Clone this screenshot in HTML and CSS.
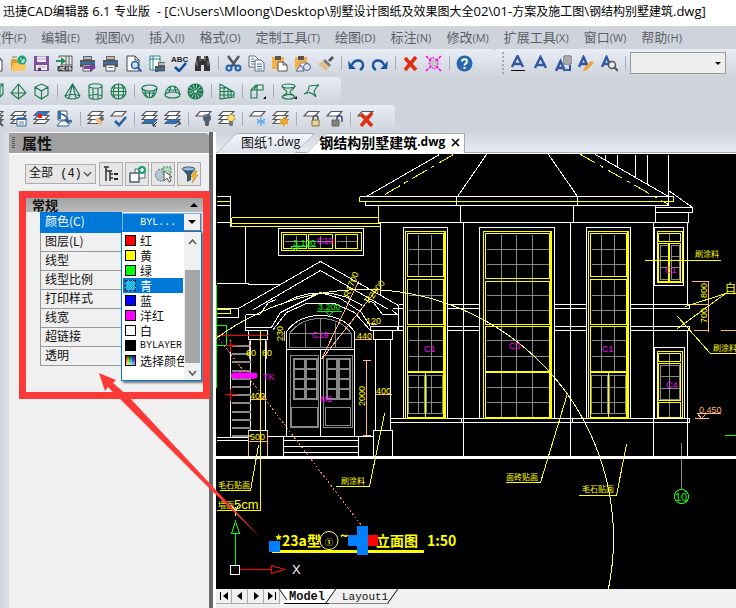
FILE: index.html
```html
<!DOCTYPE html>
<html lang="zh-CN">
<head>
<meta charset="utf-8">
<title>迅捷CAD编辑器 6.1 专业版</title>
<link rel="stylesheet" href="styles.css">
</head>
<body>
<svg class="defs" aria-hidden="true">
  <defs>
    <symbol id="sheets" viewBox="0 0 17 17"><g fill="#fff" stroke="#555" stroke-width="1.2"><path d="M5 9.500h11l-4 4H1z"/><path d="M5 5.500h11l-4 4H1z"/><path d="M5 1.500h11l-4 4H1z"/></g></symbol>
    <symbol id="sheet" viewBox="0 0 17 17"><path d="M5 1.500h11l-4 4.500H1z" fill="#fff" stroke="#555" stroke-width="1.200"/></symbol>
    <symbol id="printer" viewBox="0 0 17 17"><path d="M4 1h9v4H4z" fill="#666"/><path d="M5 2h7v2H5z" fill="#bbb"/><path d="M1 5h15v7H1z" fill="#555"/><path d="M1 7h15v1.500H1z" fill="#3b78c2"/><path d="M4 10h9v6H4z" fill="#fff" stroke="#555"/><path d="M6 12.500h5" stroke="#3b78c2"/></symbol>
    <symbol id="paste" viewBox="0 0 17 17"><path d="M1 2h12v12H1z" fill="#f2b04b"/><path d="M4 1h6v4H4z" fill="#555"/></symbol>
    <g id="casement" stroke="#888"><path d="M418 234V276M431 234V276M408 249H443M408 264H443M418 279V324M431 279V324M408 295H443M408 310H443M418 326V371M431 326V371M408 340H443M408 356H443M408 375H424V413H408ZM426 375H442V413H426ZM418 375V413M431 375V413M408 387H424M426 387H442M408 402H424M426 402H442"/><path stroke="#ff0" d="M405 231H445V418H405ZM407 233H443V276H407ZM407 279H443V324H407ZM407 326H443V371H407ZM407 372H443V417H407ZM425 372V417M444 231V418"/><path stroke="#fff" d="M403 418V227H447V418"/></g>
  </defs>
</svg>

<header class="titlebar"><h1>迅捷<span>CAD</span>编辑器<span> 6.1 </span>专业版<span>&nbsp; - [C:\Users\Mloong\Desktop\</span>别墅设计图纸及效果图大全<span>02\01-</span>方案及施工图<span>\</span>钢结构别墅建筑<span>.dwg]</span></h1></header>

<nav class="menubar" aria-label="菜单">
  <button>文件<span>(F)</span></button><button>编辑<span>(E)</span></button><button>视图<span>(V)</span></button><button>插入<span>(I)</span></button><button>格式<span>(O)</span></button><button>定制工具<span>(T)</span></button><button>绘图<span>(D)</span></button><button>标注<span>(N)</span></button><button>修改<span>(M)</span></button><button>扩展工具<span>(X)</span></button><button>窗口<span>(W)</span></button><button>帮助<span>(H)</span></button>
</nav>

<div class="toolrow">
  <div class="toolbar wide" role="toolbar" aria-label="标准">
    <button aria-label="新建"><svg viewBox="0 0 17 17"><path d="M3 1h8l4 4v11H3z" fill="#fff" stroke="#444"/><path d="M11 1v4h4" fill="none" stroke="#444"/></svg></button>
    <button aria-label="打开"><svg viewBox="0 0 17 17"><path d="M1 4h6l1 2h7v9H1z" fill="#e0982f"/><path d="M3 8h13l-1 8H1z" fill="#ffc55c"/><path d="M2 2h5" stroke="#777"/><circle cx="12" cy="5" r="4.500" fill="#1ea57a"/><path d="M10 3l4 4M14 4v3h-3" stroke="#fff" fill="none"/></svg></button>
    <button aria-label="保存"><svg viewBox="0 0 17 17"><path d="M1 1h15v15H1z" fill="#80509c"/><path d="M4 1.500h9V7H4zM3 10h11v5H3z" fill="#f1edf5"/><path d="M4 4h9M5 12h7" stroke="#aaa"/><path d="M5 13h3v3H5z" fill="#54346c"/></svg></button>
    <button aria-label="ACIS 输入"><svg viewBox="0 0 17 17"><path d="M3 1h13v15H2V11M3 1v2" fill="#eee" stroke="#555"/><path d="M10 1v9M13 1v9M4 10h12" stroke="#555"/><path d="M0 5h5V2l5 4-5 4V7H0z" fill="#218f5a"/><path d="M2 11h14v5H2z" fill="#444"/><path d="M4 15v-2l1-1 1 1v2M9 12H7v3h2M11 12v3M15 12h-2v1.500h2V15h-2" stroke="#fff" fill="none" stroke-width=".8"/></svg></button>
    <button aria-label="输出"><svg viewBox="0 0 17 17"><use href="#printer"/><path d="M5 11h6V8l6 4.500-6 4.500v-3H5z" fill="#7b3fa0"/></svg></button>
    <button aria-label="打印"><svg><use href="#printer"/></svg></button>
    <button aria-label="打印预览"><svg viewBox="0 0 17 17"><path d="M2 1h8l4 4v11H2z" fill="#fff" stroke="#444"/><path d="M10 1v4h4" fill="none" stroke="#444"/><circle cx="10" cy="10" r="3.500" fill="#cde0f5" stroke="#2360ae" stroke-width="1.600"/><path d="M12.500 12.500l4 4" stroke="#2360ae" stroke-width="2"/></svg></button>
    <button aria-label="页面设置"><svg viewBox="0 0 17 17"><path d="M2 1h10v14H2z" fill="#fff" stroke="#2a8291"/><path d="M5 1v14M2 4h10" stroke="#2a8291"/><svg x="6" y="6" width="11" height="11"><use href="#printer"/></svg></svg></button>
    <button aria-label="拼写检查"><svg viewBox="0 0 17 17"><path d="M4 12l4 4 7-8" fill="none" stroke="#0a50a1" stroke-width="2.500"/><text x="0" y="7" class="abc">ABC</text></svg></button>
    <button aria-label="查找"><svg viewBox="0 0 17 17"><path d="M3 1h4v3h3V1h4l2 9v6h-6v-6H7v6H1v-6z" fill="#333"/><path d="M3 6v5M14 6v5M6 1v5M11 1v5" stroke="#999"/></svg></button>
    <hr>
    <button aria-label="剪切"><svg viewBox="0 0 17 17"><path d="M3 1l8 11M14 1L6 12" stroke="#555" stroke-width="2.400"/><circle cx="4" cy="13" r="2.500" fill="none" stroke="#1f62b4" stroke-width="2"/><circle cx="13" cy="13" r="2.500" fill="none" stroke="#1f62b4" stroke-width="2"/></svg></button>
    <button aria-label="复制"><svg viewBox="0 0 17 17"><path d="M1 1h6l3 3v8H1z" fill="#fff" stroke="#667"/><path d="M3 4h3M3 6.500h5M3 9h5" stroke="#2f72be"/><path d="M7 5h6l3 3v8H7z" fill="#fff" stroke="#667"/><path d="M9 9h5M9 11.500h5M9 14h5" stroke="#2f72be"/></svg></button>
    <button aria-label="粘贴"><svg viewBox="0 0 17 17"><use href="#paste"/><path d="M7 7h5l4 3v6H7z" fill="#fff" stroke="#555"/><path d="M12 7v3h4" fill="none" stroke="#555"/></svg></button>
    <button aria-label="粘贴为块"><svg viewBox="0 0 17 17"><use href="#paste"/><path d="M6 8h8v6H6z" fill="#fff" stroke="#888"/><path d="M2 16l5-6 3 6z" fill="#e6ebf5" stroke="#4c628e"/><circle cx="13" cy="12" r="3.500" fill="#d7e0f0" stroke="#4c628e"/></svg></button>
    <button aria-label="特性匹配"><svg viewBox="0 0 17 17"><path d="M11 5l4-4 2 2-4 4z" fill="#555"/><path d="M8 4l6 6-2 2-6-6z" fill="#777"/><path d="M6 6l6 6-3 4-8-7z" fill="#e5bd88"/></svg></button>
    <hr>
    <button aria-label="撤销"><svg viewBox="0 0 17 17"><path d="M4 10c2-6 11-6 11 0 0 2-1 4-3 5" fill="none" stroke="#15559f" stroke-width="2.400"/><path d="M0 6l1 8h7z" fill="#15559f"/></svg></button>
    <button aria-label="重做"><svg viewBox="0 0 17 17"><path d="M13 10C11 4 2 4 2 10c0 2 1 4 3 5" fill="none" stroke="#15559f" stroke-width="2.400"/><path d="M17 6l-1 8H9z" fill="#15559f"/></svg></button>
    <hr>
    <button aria-label="删除"><svg viewBox="0 0 17 17"><path d="M3 3l11 12M14 2L3 15" stroke="#e02d10" stroke-width="3.500"/></svg></button>
    <button aria-label="清理"><svg viewBox="0 0 17 17"><path d="M5 4l3-2 2 2 3 2v5l-3 3-3-1-3-4z" fill="#c3c3c3" stroke="#f0f" stroke-dasharray="2 1"/><path d="M1 1l5 5M16 1l-5 5M1 16l5-5M16 16l-5-5" stroke="#f0f" stroke-width="1.500" stroke-dasharray="3 1"/></svg></button>
    <hr>
    <button aria-label="帮助"><svg viewBox="0 0 17 17"><circle cx="8.500" cy="8.500" r="8" fill="#2768a8"/><path d="M6 6.500c0-3 5-3 5 0 0 2-2.500 2-2.500 4M8.500 12v2" fill="none" stroke="#fff" stroke-width="2"/></svg></button>
  </div>
  <div class="toolbar fill" role="toolbar" aria-label="文字">
    <i class="grip"></i>
    <button aria-label="多行文字"><svg viewBox="0 0 17 17"><path d="M3 12L8.500 1 14 12M5 9h7" fill="none" stroke="#3157a0" stroke-width="2.400"/><path d="M2 15.500h14" stroke="#111"/></svg></button>
    <button aria-label="单行文字"><svg viewBox="0 0 17 17"><path d="M3 13L8.500 2 14 13M5 10h7" fill="none" stroke="#3157a0" stroke-width="2.400"/></svg></button>
    <button aria-label="文字字段"><svg viewBox="0 0 17 17"><path d="M9 1h7v8H9z" fill="#fff" stroke="#555"/><path d="M10 3h5M10 5h5M10 7h5" stroke="#555"/><path d="M1 16L5.500 6 10 16M3 13h6" fill="none" stroke="#3157a0" stroke-width="2.400"/><path d="M15 10v5h-4" fill="none" stroke="#3157a0" stroke-width="2"/></svg></button>
    <button aria-label="编辑文字"><svg viewBox="0 0 17 17"><path d="M1 12L5.500 2 10 12M3 9h6" fill="none" stroke="#3157a0" stroke-width="2.400"/><path d="M6 13l7-7 3 2-7 7-4 1z" fill="#efa43c"/></svg></button>
    <button aria-label="查找文字"><svg viewBox="0 0 17 17"><path d="M1 12L5.500 2 10 12M3 9h6" fill="none" stroke="#3157a0" stroke-width="2.400"/><circle cx="11" cy="10" r="3.500" fill="#eee" stroke="#555" stroke-width="1.500"/><path d="M13 12l4 4" stroke="#555" stroke-width="2"/></svg></button>
    <hr>
    <label class="style-select"><select aria-label="文字样式"><option></option></select><i></i></label>
  </div>
</div>

<div class="toolrow">
  <div class="toolbar green" role="toolbar" aria-label="三维曲面">
    <button aria-label="方块"><svg viewBox="0 0 17 17"><path d="M2 4h11v10H2zM2 4l3-3h11v10l-3 3M13 4l3-3"/></svg></button>
    <button aria-label="棱锥"><svg viewBox="0 0 17 17"><path d="M8.500 1L1 10l7.500 6L16 10zM8.500 1v15M1 10h15" /></svg></button>
    <button aria-label="盒"><svg viewBox="0 0 17 17"><path d="M8.500 1L15 4v8l-6.500 4L2 12V4zM2 4l6.500 4L15 4M8.500 8v8"/></svg></button>
    <hr>
    <button aria-label="圆锥"><svg viewBox="0 0 17 17"><path d="M8.500 1L1 13c3 4 12 4 15 0zM8.500 1L5 15M8.500 1l3.500 14M1 13c4-2 11-2 15 0"/></svg></button>
    <button aria-label="圆柱"><svg viewBox="0 0 17 17"><path d="M2 3c0-3 13-3 13 0v11c0 3-13 3-13 0zM2 3c0 3 13 3 13 0M6 5v11M11 5v11M2 13c3-2 10-2 13 0"/></svg></button>
    <button aria-label="球"><svg viewBox="0 0 17 17"><circle cx="8.500" cy="8.500" r="7.500"/><path d="M8.500 1v15M1 8.500h15M5 2c-2 4-2 9 0 13M12 2c2 4 2 9 0 13M2 5h13M2 12h13"/></svg></button>
    <hr>
    <button aria-label="下半球"><svg viewBox="0 0 17 17"><path d="M1 5c1 13 14 13 15 0M4 8c0 3 2 6 3 6M13 8c0 3-2 6-3 6M8.500 8v6M2 10h13"/><ellipse cx="8.500" cy="5" rx="7.500" ry="3"/></svg></button>
    <button aria-label="上半球"><svg viewBox="0 0 17 17"><path d="M1 12C2 0 15 0 16 12M5 9l2-6M12 9l-2-6M3 7h11"/><ellipse cx="8.500" cy="12" rx="7.500" ry="3"/></svg></button>
    <button aria-label="圆环"><svg viewBox="0 0 17 17"><circle cx="8.500" cy="8.500" r="5" stroke-width="5" stroke-dasharray="2 .7"/><circle cx="8.500" cy="8.500" r="7.500"/><circle cx="8.500" cy="8.500" r="2"/></svg></button>
    <hr>
    <button aria-label="网格"><svg viewBox="0 0 17 17"><path d="M2 1v15l14-2V9L2 1M6 3v13M10 5.500V15M13 7.500V14.500M2 5h8M2 8.500h14M2 12h14"/></svg></button>
    <hr>
    <button aria-label="拉伸"><svg viewBox="0 0 17 17"><path d="M2 7h6v8H2zM8 7V2h6v5H8M2 7l5-5h7M8 15V7M5 7l3-5"/><path d="M14 16h3v-3z" fill="#000" stroke="none"/></svg></button>
    <hr>
    <button aria-label="旋转"><svg viewBox="0 0 17 17"><ellipse cx="8.500" cy="3" rx="6.500" ry="2"/><path d="M2 3c2 5 5 4 5 6s-4 3-5 5c3 3 10 3 13 0-1-2-5-3-5-5s3-1 5-6M3 13c4-2 8-2 11 0"/><path d="M14 16h3v-3z" fill="#000" stroke="none"/></svg></button>
    <button aria-label="直纹"><svg viewBox="0 0 17 17"><path d="M6 3l10-1M6 3c0 5-2 7-5 8M1 11c5-2 8-2 12 3M16 2c-3 2-5 6-5 8M11 9l2 5"/></svg></button>
  </div>
</div>

<div class="toolrow last">
  <div class="toolbar long" role="toolbar" aria-label="图层">
    <button aria-label="图层查找"><svg viewBox="0 0 17 17"><use href="#sheets"/><circle cx="10" cy="10" r="4" fill="#eee" stroke="#555" stroke-width="1.500"/><path d="M13 13l3 3" stroke="#555" stroke-width="2"/></svg></button>
    <button aria-label="图层管理器"><svg viewBox="0 0 17 17"><use href="#sheets"/><path d="M7 8h9v8H7z" fill="#fff" stroke="#2563a4"/><path d="M7 9h9" stroke="#2563a4" stroke-width="2"/><path d="M9 12h5M9 14h5" stroke="#777"/></svg></button>
    <button aria-label="当前图层"><svg viewBox="0 0 17 17"><use href="#sheets"/><path d="M5 1.500h11l-4 4.500H1z" fill="#3475bd"/><path d="M5 4h4v4H5z" fill="#e02020"/></svg></button>
    <button aria-label="上一图层"><svg viewBox="0 0 17 17"><path d="M2 1h9v9H2z" fill="#fff" stroke="#555"/><path d="M2 1h3v8H2z" fill="#2f72b9"/><path d="M1 16l4-5h11l-4 5z" fill="#fff" stroke="#2d5d93"/><path d="M5 4c5 1 7 4 7 8M9 9l3 4 3-3" stroke="#2d5d93" stroke-width="1.500" fill="none"/></svg></button>
    <hr>
    <button aria-label="图层匹配"><svg viewBox="0 0 17 17"><use href="#sheets"/><path d="M8 10l3-3 5 5-3 4z" fill="#e4bd8a"/><path d="M12 8l3-2 2 2-2 3z" fill="#666"/></svg></button>
    <button aria-label="应用图层"><svg viewBox="0 0 17 17"><use href="#sheet"/><path d="M5 11l4 4 7-8" fill="none" stroke="#2862a3" stroke-width="2.600"/></svg></button>
    <hr>
    <button aria-label="隔离图层"><svg viewBox="0 0 17 17"><use href="#sheets"/><path d="M5 9.500h11l-4 4H1z" fill="#2f70b7"/><path d="M16 12l-4 4M12 13v3h3" fill="none" stroke="#222"/></svg></button>
    <button aria-label="取消隔离"><svg viewBox="0 0 17 17"><use href="#sheets"/><path d="M5 9.500h11l-4 4H1z" fill="#2f70b7"/><path d="M11 17l5-4M13 12h3v3" fill="none" stroke="#222"/></svg></button>
    <hr>
    <button aria-label="关闭图层"><svg viewBox="0 0 17 17"><use href="#sheet"/><circle cx="12" cy="8" r="4" fill="#4e6172"/><path d="M10 11h4v4l-1 1h-2l-1-1z" fill="#5c5c5c"/><path d="M10 6l2-1" stroke="#aac"/></svg></button>
    <button aria-label="打开图层"><svg viewBox="0 0 17 17"><use href="#sheets"/><circle cx="13" cy="8" r="3.500" fill="#fbe46c" stroke="#a88c28" stroke-width=".7"/><path d="M11 11h4v4l-1 1h-2l-1-1z" fill="#777"/></svg></button>
    <hr>
    <button aria-label="冻结图层"><svg viewBox="0 0 17 17"><use href="#sheet"/><path d="M12 7v9M8 9l8 5M16 9l-8 5M8 11.500h8" stroke="#6baeef" stroke-width="1.400"/></svg></button>
    <button aria-label="解冻图层"><svg viewBox="0 0 17 17"><use href="#sheets"/><path d="M12 7v9M8 9l8 5M16 9l-8 5M8 11.500h8" stroke="#f2a32c" stroke-width="2"/></svg></button>
    <hr>
    <button aria-label="锁定图层"><svg viewBox="0 0 17 17"><use href="#sheet"/><path d="M10 10V8c0-3 5-3 5 0v2" fill="none" stroke="#555" stroke-width="1.500"/><path d="M9 10h7v6H9z" fill="#e8d68c" stroke="#66572b" stroke-width=".8"/></svg></button>
    <button aria-label="解锁图层"><svg viewBox="0 0 17 17"><use href="#sheet"/><path d="M11 10V8c0-3 5-3 5 0v4" fill="none" stroke="#3c4878" stroke-width="1.500"/><path d="M6 10h7v6H6z" fill="#858576" stroke="#666"/></svg></button>
    <hr>
    <button aria-label="删除图层"><svg viewBox="0 0 17 17"><use href="#sheet"/><path d="M4 4l11 12M15 3L4 16" stroke="#e02d10" stroke-width="3.500"/></svg></button>
  </div>
</div>

<main class="workspace">
  <div class="dock"></div>
  <aside class="palette">
    <h2><i class="grip"></i>属性</h2>
    <div class="palette-tools">
      <label class="filter"><select aria-label="对象"><option>全部 (4)</option></select><svg viewBox="0 0 10 6"><path d="M1 1l4 4 4-4"/></svg></label>
      <button aria-label="分类"><svg viewBox="0 0 17 17"><path d="M1 1h5M3 1v14M3 5h6M7 5v10M7 8h3M7 12h3" fill="none" stroke="#333" stroke-width="1.500"/><path d="M11 8h4M11 13h4" stroke="#222" stroke-width="2"/></svg></button>
      <button aria-label="添加选择"><svg viewBox="0 0 17 17"><path d="M6 3h10v9H6z" fill="#fff" stroke="#4a6379"/><path d="M1 7h9v9H1z" fill="#fff" stroke="#4a6379" stroke-width="1.500"/><circle cx="13" cy="4" r="4" fill="#1f9f68"/><path d="M13 2v4M11 4h4" stroke="#fff" stroke-width="1.500"/></svg></button>
      <button aria-label="选择对象"><svg viewBox="0 0 17 17"><circle cx="6.500" cy="9" r="6" fill="#b7c5d3" stroke="#4f6274" stroke-dasharray="2 1"/><path d="M8 1h8v7H8z" fill="#b3d7ba" stroke="#419457" stroke-dasharray="2 1"/><path d="M9 5v10l3-3 2 4 2-1-2-4h3z" fill="#fff" stroke="#555"/></svg></button>
      <button aria-label="快速选择"><svg viewBox="0 0 17 17"><path d="M1 3l5 6v7l4-2V9l4-6z" fill="#3c566e"/><ellipse cx="7.500" cy="3" rx="6.500" ry="2" fill="#8fbfe8" stroke="#3c566e"/><path d="M14 5l-4 6h3l-2 6 6-8h-3l2-4z" fill="#ffb31c" stroke="#b67408" stroke-width=".5"/></svg></button>
    </div>
    <section class="group">
      <h3>常规<i></i></h3>
      <table>
        <tr class="active"><th scope="row">颜色(C)</th><td><button class="combo" aria-haspopup="listbox" aria-expanded="true"><span>BYL...</span><i></i></button></td></tr>
        <tr><th scope="row">图层(L)</th><td></td></tr>
        <tr><th scope="row">线型</th><td></td></tr>
        <tr><th scope="row">线型比例</th><td></td></tr>
        <tr><th scope="row">打印样式</th><td></td></tr>
        <tr><th scope="row">线宽</th><td></td></tr>
        <tr><th scope="row">超链接</th><td></td></tr>
        <tr><th scope="row">透明</th><td></td></tr>
      </table>
      <div class="popup">
        <ul role="listbox" aria-label="颜色">
          <li role="option"><i class="red"></i>红</li>
          <li role="option"><i class="yellow"></i>黄</li>
          <li role="option"><i class="lime"></i>绿</li>
          <li role="option" class="selected" aria-selected="true"><i class="cyan"></i>青</li>
          <li role="option"><i class="blue"></i>蓝</li>
          <li role="option"><i class="magenta"></i>洋红</li>
          <li role="option"><i class="white"></i>白</li>
          <li role="option"><i class="black"></i><span>BYLAYER</span></li>
          <li role="option"><i class="mixed"></i>选择颜色</li>
        </ul>
        <div class="scroll"><svg viewBox="0 0 9 6"><path d="M1 5l3.500-4L8 5"/></svg><b></b><svg viewBox="0 0 9 6"><path d="M1 1l3.500 4L8 1"/></svg></div>
      </div>
    </section>
  </aside>
  <section class="document">
    <div class="tabs" role="tablist">
      <button role="tab" class="tab">图纸<span>1.dwg</span></button>
      <button role="tab" class="tab current" aria-selected="true">钢结构别墅建筑<span>.dwg</span><svg viewBox="0 0 9 9"><path d="M1 1l7 7M8 1L1 8"/></svg></button>
    </div>
    <svg class="canvas" viewBox="216 154 520 435" preserveAspectRatio="xMinYMin slice" role="img" aria-label="钢结构别墅立面图">
      <g transform="translate(.5 .5)" fill="none" shape-rendering="crispEdges">
        <!-- roof and eaves -->
        <path stroke="#fff" d="M366 196L439 154M486 154L457 196M548 154L577 196M595 154L668 196M605 154V159M617 154V166M635 154V177M647 154V184M668 154V205M668 190L692 207M359 196H673M365 201V205H668M378 222H688M456 196V205M577 196V205M460 205V222M573 205V222M655 207H692V212H655ZM655 205V222M688 212V222"/>
        <path stroke="#ff0" d="M359 196V201H673V196M378 205V222M231 217H378M231 223H380M231 226H380M231 217V226M216 201H230"/>
        <path stroke="#ff0" stroke-dasharray="17 5 4 5" d="M453 154L381 196M580 154L668 204"/>
        <path stroke="#fff" d="M216 196H230V222H216M216 205H230M230 222V226M245 226V283M216 283H248V284H280M380 222V295M463 222V456M570 222V456M653 222V456M687 222V304M687 330V456"/>
        <!-- belts between the windows -->
        <path stroke="#fff" d="M398 304H403M392 308H403M447 304H479M447 308H479M554 304H586M554 308H586M630 304H689V308H630M390 326H403M390 330H403M447 326H479M447 330H479M554 326H586M554 330H586M630 326H689V330H630M390 418H689V422H390M461 418V422M572 418V422M397 326V330"/>
        <!-- small upper window -->
        <path stroke="#fff" d="M278 228H363V255H278Z"/>
        <path stroke="#888" d="M284 241H306M309 241H332M336 241H357M296 235V248M320 235V248M346 235V248"/>
        <path stroke="#ff0" d="M281 232H361V250H281ZM283 234H306V248H283ZM308 234H332V248H308ZM335 234H357V248H335Z"/>
        <!-- tall windows -->
        <use href="#casement"/><use href="#casement" x="183"/>
        <path stroke="#888" d="M501 234V417M516 234V417M532 234V417M486 249H549M486 264H549M486 295H549M486 310H549M486 340H549M486 356H549M486 387H549M486 402H549"/>
        <path stroke="#ff0" d="M483 231H551V418H483ZM485 233H549V278H485ZM485 281H549V324H485ZM485 326H549V371H485ZM485 372H549V417H485ZM550 231V418"/>
        <path stroke="#fff" d="M479 418V227H554V418"/>
        <!-- right windows -->
        <path stroke="#888" d="M660 245H668V279H660ZM671 245H679V279H671ZM660 256H668M671 256H679M660 267H668M671 267H679M669 233V241M660 365H679V399H660ZM669 353V417M660 376H679M660 388H679"/>
        <path stroke="#ff0" d="M657 231H682V282H657ZM658 233H680V241H658ZM658 243H680V281H658ZM669 243V281M668 243V281M657 351H682V417H657ZM658 353H680V361H658ZM658 363H680V400H658ZM658 402H680V417H658Z"/>
        <path stroke="#fff" d="M654 227H683V285H654ZM654 418V347H684V418"/>
        <!-- entrance gable -->
        <path stroke="#fff" d="M216 308H238L320 261L398 305V315L392 310M238 308V317H216M253 309L320 270L388 309M245 314V327H271L280 312L300 302L320 292M245 314H259L268 302L276 299M320 292L340 298L361 312L370 326H398V314H382L373 302L364 299M272 330L286 312L306 303H334L354 312L370 330M280 304L297 296L310 293H332L347 297L362 305M248 330H267V339H248ZM373 330H392V339H373ZM250 339V430M265 339V430M375 339V430M390 339V430M248 456V430H267V456M373 456V430H392V456M245 327V330H267M370 326V330H398V326"/>
        <path stroke="#ff0" d="M216 309H230V313H216"/>
        <!-- door -->
        <path stroke="#fff" d="M286 435V331Q298 315 320 315T354 331V435M286 349H354M320 349V435M267 436H373M283 436V456H358V436M283 440H358M283 446H358M283 452H358"/>
        <path stroke="#888" d="M289 347V333Q300 318 320 318T351 333V347ZM289 333H351M305 322V347M335 322V347M320 318V347M290 355H318V427H290ZM323 355H352V427H323ZM291 407H317V426H291ZM325 407H350V425H325Z"/>
        <path stroke="#888" stroke-width="2" d="M293 358H304V398H293ZM305 358H316V398H305ZM326 358H336V398H326ZM338 358H349V398H338ZM293 368H316M293 378H316M293 388H316M326 368H349M326 378H349M326 388H349"/>
        <!-- side shutters -->
        <path stroke="#888" stroke-width="2" d="M231 345H250M231 353H250M231 361H250M231 370H250M231 378H250M231 386H250M231 394H250M231 402H250M231 411H250M231 419H250M231 427H250M231 435H250"/>
        <path stroke="#fff" d="M230 339V437M216 437H248M216 440H248"/>
        <path stroke="#0f0" d="M216 284V387M216 325H226V345H216M290 246H315M291 247L295 250L298 247M316 311H341M325 311L329 315L333 311M724 435H736"/>
        <path stroke="#f00" d="M216 335H267M225 345H236M230 340V351M224 394H236M230 388V400"/>
        <!-- dimensions -->
        <path stroke="#ffb878" d="M321 359L358 281M321 359L377 288M354 339H371M370 324H376M250 399H266M248 441H267M366 360V435M362 360H370M362 435H370M374 394H391M248 430V456M267 430V456M249 340V358M266 340V358M284 330V340M708 281V331M691 281H708M691 304H708M693 330H708M720 330H736M697 413H720M697 413L701 418L706 413M694 418H708"/>
        <path stroke="#ff8030" stroke-dasharray="2 2" d="M216 335L361 525"/>
        <circle cx="364" cy="538" r="249" stroke="#ff8"/>
        <path stroke="#ff0" d="M260 329V510H216M258 445L250 490H219M384 413L369 486H335M567 393L540 482H505M626 444L616 495H578M644 260H720M685 306L725 293H736M677 328L725 293M677 316L710 353H736"/>
        <path stroke="#888" d="M681 442V489"/>
        <circle cx="681" cy="496" r="7" stroke="#0f0"/>
        <rect x="216" y="456" width="520" height="3" fill="#fff" transform="translate(-.5 -.5)"/>
        <!-- coordinate axes -->
        <path stroke="#0f0" d="M235 521L231 533H239ZM235 533V565"/>
        <path stroke="#f00" d="M239 569H271M271 565L284 569L271 573Z"/>
        <rect x="230" y="565" width="9" height="9" rx="1" stroke="#fff"/>
        <path stroke="#fff" d="M231 505L235 510L238 505M235 510V515"/>
      </g>
      <g class="note" fill="#ff0">
        <text x="218" y="488">毛石贴面</text><text x="218" y="508">墙面</text><text x="234" y="509" class="big">5cm</text>
        <text x="341" y="484">刷涂料</text><text x="506" y="480">面砖贴面</text><text x="582" y="492">毛石贴面</text>
        <text x="695" y="257">刷涂料</text><text x="713" y="351">刷涂料</text><text x="725" y="292" class="mid">白</text>
      </g>
      <g class="dim" fill="#ff0">
        <text x="250" y="399">400</text><text x="250" y="440">500</text><text x="246" y="356">60</text><text x="262" y="356">60</text><text x="376" y="394">400</text><text x="357" y="339">440</text><text x="366" y="324">120</text>
        <text transform="translate(283 341) rotate(-90)">230</text><text transform="translate(365 406) rotate(-90)">2000</text><text transform="translate(707 298) rotate(-90)">800</text><text transform="translate(707 323) rotate(-90)">700</text>
        <text transform="translate(349 298) rotate(-68)">R1700</text><text transform="translate(369 304) rotate(-52)">R2000</text>
        <text x="699" y="413" fill="#ffb878">0.450</text>
      </g>
      <g class="dim" fill="#0f0"><text x="293" y="246">3.100</text><text x="318" y="310">3.200</text><text x="675" y="501" class="big narrow">10</text></g>
      <g class="dim" fill="#f0f"><text x="317" y="244">C10</text><text x="312" y="338">C19</text><text x="320" y="402">M1</text><text x="424" y="352">C1</text><text x="509" y="349">C3</text><text x="602" y="352">C1</text><text x="666" y="388">C4</text><text x="665" y="273">C1</text><text x="263" y="380">TK</text></g>
      <path d="M231 374l3-2 3 1 3-1 4 1 4-1 4 1h5v5l-4 1-4-1-4 1-3-1-4 1-3-1-4 0z" fill="#f0f"/>
      <text x="292" y="574" class="big" fill="#fff">X</text>
      <rect x="272" y="550" width="152" height="3" fill="#ff0"/>
      <g class="name" fill="#ff0"><text x="275" y="546">*23a型</text><text x="325" y="545" class="small">①</text><text x="340" y="541">~</text><text x="376" y="546">立面图</text><text x="427" y="546">1:50</text></g>
      <circle cx="329" cy="540.500" r="9" fill="none" stroke="#ff8"/>
      <path d="M269 541h11v11h-11zM357 526h11v29h-11zM348 535h10v11h-10z" fill="#0080ff"/>
      <path d="M368 535h10v11h-10z" fill="#f00"/>
    </svg>
    <div class="layouts">
      <button aria-label="第一个"><svg viewBox="0 0 10 10"><path d="M1 1h1v8H1zM9 1v8L4 5z"/></svg></button>
      <button aria-label="上一个"><svg viewBox="0 0 10 10"><path d="M7 1v8L2 5z"/></svg></button>
      <button aria-label="下一个"><svg viewBox="0 0 10 10"><path d="M3 1v8l5-4z"/></svg></button>
      <button aria-label="最后一个"><svg viewBox="0 0 10 10"><path d="M1 1v8l5-4zM8 1h1v8H8z"/></svg></button>
      <button class="sheet current">Model</button>
      <button class="sheet">Layout1</button>
    </div>
  </section>
</main>

<svg class="callout" viewBox="0 0 736 608" aria-hidden="true">
  <rect x="22.500" y="194.500" width="184" height="201" fill="none" stroke="#fb3936" stroke-width="7"/>
  <path d="M99 373l17 7-3 3 15 13 86 92 45 48-48-46-91-91-12-12-3 4z" fill="#fb3936"/>
</svg>
</body>
</html>
```
FILE: styles.css
```css
* { box-sizing: border-box; }
body {
  margin: 0;
  height: 100vh;
  display: flex;
  flex-direction: column;
  overflow: hidden;
  background: #cfd3dc;
  color: #111;
  font: 12px/16px "Noto Sans CJK SC", sans-serif;
}
button, select {
  margin: 0;
  padding: 0;
  border: 0;
  border-radius: 0;
  background: none;
  color: inherit;
  font: inherit;
}
h1, h2, h3 { margin: 0; font-weight: normal; }
.defs { position: absolute; width: 0; height: 0; }

.titlebar { flex: none; height: 26px; padding: 0 3px; background: #fff; color: #000; overflow: hidden; }
.titlebar h1 { font-size: 12px; line-height: 22px; white-space: nowrap; }
.titlebar span { font-family: "Open Sans", sans-serif; font-size: 13px; white-space: pre; }

.menubar { flex: none; display: flex; gap: 15px; height: 23px; margin-left: -12px; color: #5b5e66; }
.menubar button { flex: none; font-size: 13px; line-height: 20px; white-space: nowrap; }
.menubar span { font-family: "Open Sans", sans-serif; font-size: 11px; }

.toolrow { flex: none; display: flex; height: 28px; overflow: hidden; }
.toolrow.last { height: 27px; }
.toolbar {
  display: flex;
  align-items: center;
  flex: none;
  margin-left: -16px;
  padding-right: 18px;
  border-radius: 0 4px 4px 0;
  background: linear-gradient(#e9edf6, #cfd3dc);
}
.toolbar.fill { flex: 1; margin-left: 0; padding-right: 10px; border-radius: 4px 0 0 0; }
.toolbar button { flex: none; display: grid; place-items: center; width: 23px; height: 23px; }
.toolbar button svg { width: 17px; height: 17px; }
.toolbar hr { width: 1px; height: 14px; margin: 0 3px 0 4px; border: 0; background: #a9adb6; }
.green button svg { fill: none; stroke: #16794a; stroke-width: 1.1; }
.abc { font: bold 8px "Liberation Sans", sans-serif; fill: #222; }
.toolbar .grip { width: 2px; height: 22px; margin: 0 2px 0 8px; background: repeating-linear-gradient(#a4a8b2 0 2px, transparent 2px 4px); }
.style-select { flex: 1; display: flex; align-items: center; max-width: 96px; height: 22px; margin-left: 1px; padding-right: 4px; border: 1px solid #999; background: #efefef; }
.style-select select { flex: 1; min-width: 0; height: 20px; appearance: none; }
.style-select i { border: 3px solid transparent; border-bottom: 0; border-top-color: #000; }

.workspace { flex: 1; display: flex; min-height: 0; background: #fff; }
.dock { width: 9px; flex: none; background: linear-gradient(90deg, #d0d5df, #dde1ea); }
.palette { position: relative; flex: none; width: 204px; padding-top: 1px; border-right: 4px solid #696969; background: #f0f0f0; }
.palette h2 { display: flex; align-items: center; gap: 7px; height: 21px; padding-left: 3px; border-radius: 0 4px 0 0; border-bottom: 1px solid #fff; background: #a0a0a0; font-size: 15px; font-weight: bold; }
.palette h2 .grip { width: 3px; height: 12px; background: repeating-linear-gradient(#555 0 1px, transparent 1px 2px); }
.palette-tools { display: flex; gap: 2px; padding: 8px 0 0 16px; }
.palette-tools button { width: 24px; height: 24px; border: 1px solid #adadad; background: #e6e6e6; display: grid; place-items: center; }
.palette-tools button svg { width: 17px; height: 17px; }
.filter { display: flex; align-items: center; justify-content: space-between; width: 71px; height: 20px; margin: 2px 1px 2px 0; padding: 0 3px; border: 1px solid #adadad; background: #e6e6e6; }
.filter select { appearance: none; width: 54px; font-family: "Liberation Mono", "Noto Sans CJK SC", monospace; }
.filter svg { width: 9px; height: 6px; flex: none; }
.filter path, .scroll path { fill: none; stroke: #555; stroke-width: 1.5; }

.group { position: relative; margin: 11px 2px 0 17px; }
.group h3 { display: flex; align-items: center; justify-content: space-between; height: 15px; padding: 0 9px 0 6px; background: linear-gradient(#a0a0a0, #bbb); font-size: 13px; line-height: 13px; font-weight: bold; }
.group h3 i { border: 4px solid transparent; border-top: 0; border-bottom-color: #000; }
.group table { margin-left: 14px; border-collapse: collapse; table-layout: fixed; width: 162px; }
.group th, .group td { height: 19px; padding: 0; border: 1px solid #999; }
.group th { width: 81px; padding: 0 0 3px 4px; text-align: left; font-weight: normal; line-height: 15px; }
.group .active th { background: #0078d7; border-color: #0078d7; color: #fff; }
.group .active td { border: 0; }
.combo { display: flex; align-items: center; width: 100%; height: 19px; border: 1px solid #7ab8ec; background: #0078d7; color: #fff; font: 10px/17px "Liberation Mono", monospace; }
.combo span { flex: 1; padding-left: 10px; }
.combo i { width: 17px; height: 17px; display: grid; place-items: center; background: #f0f0f0; border-right: 1px solid #777; border-bottom: 1px solid #777; }
.combo i::before { content: ""; border: 4px solid transparent; border-bottom: 0; border-top-color: #000; }
.popup { position: absolute; top: 34px; left: 95px; width: 81px; height: 150px; display: flex; border: 1px solid #0078d7; background: #fff; box-shadow: 2px 2px 2px #777; }
.popup ul { flex: 1; min-width: 0; margin: 0; padding: 1px 1px 0; list-style: none; overflow: hidden; }
.popup li { display: flex; align-items: center; gap: 4px; height: 15px; padding-left: 2px; white-space: nowrap; line-height: 13px; }
.popup li span { font: 10px/15px "Liberation Mono", monospace; }
.popup li i { flex: none; width: 11px; height: 11px; border: 1px solid #000; }
.popup .selected { background: #0078d7; color: #fff; }
.red { background: #f00; }
.yellow { background: #ff0; }
.lime { background: #0f0; }
.popup .cyan { border: 1px dashed #025; background: repeating-conic-gradient(#30dce8 0 25%, #1698dc 0 50%) 0 0 / 2px 2px; }
.blue { background: #00f; }
.magenta { background: #f0f; }
.white { background: #fff; }
.black { background: #000; }
.mixed { background: linear-gradient(#000a, transparent, #fff9), linear-gradient(90deg, #f33, #dd2, #2d3, #2cd, #33f, #d3d); }
.scroll { flex: none; width: 17px; display: grid; grid-template-rows: 38px 1fr 17px; justify-items: center; background: #f0f0f0; }
.scroll svg { width: 9px; height: 6px; margin-top: 7px; }
.scroll b { width: 15px; background: #a6a6a6; }

.document { flex: 1; min-width: 0; display: flex; flex-direction: column; border-left: 3px solid #fff; }
.tabs { flex: none; display: flex; height: 22px; border-bottom: 1px solid #fff; background: linear-gradient(#cfd3dc, #e9edf6); box-shadow: inset 0 -1px #aaadb5; }
.tab { position: relative; z-index: 0; flex: none; display: flex; align-items: center; height: 20px; margin-top: 1px; padding: 0 6px 2px 25px; font-size: 13px; line-height: 18px; white-space: nowrap; }
.tab::before { content: ""; position: absolute; z-index: -1; inset: 0 0 0 10px; border: 1px solid #a7abb5; border-bottom: 0; border-radius: 3px 3px 0 0; background: linear-gradient(#f3f5fa, #dde1ea); transform: skewX(-45deg); }
.tab span { font-family: "Open Sans", sans-serif; font-size: 12px; }
.tab.current { padding: 0 5px 2px 13px; font-size: 14px; font-weight: bold; color: #000; }
.tab.current::before { right: 30px; background: #fff; }
.tab.current::after { content: ""; position: absolute; z-index: -1; inset: 0 0 0 50%; border: solid #a7abb5; border-width: 1px 1px 0 0; background: #fff; }
.tab.current svg { width: 9px; height: 9px; margin-left: 6px; fill: none; stroke: #000; stroke-width: 1.6; }

.canvas { flex: 1; min-height: 0; width: 100%; display: block; background: #000; }
.note { font: 8px "Noto Sans CJK SC", sans-serif; }
.dim { font: 9px "Liberation Sans Narrow", "Liberation Sans", sans-serif; }
.canvas .big { font: 13px "Liberation Sans", sans-serif; }
.canvas .narrow { font-size: 11px; }
.canvas .mid { font-size: 11px; }
.name { font: bold 14px "Liberation Sans Narrow", "Noto Sans CJK SC", sans-serif; }
.canvas .small { font-size: 8px; }

.layouts { flex: none; display: flex; height: 19px; background: #f0f0f0; }
.layouts button { flex: none; display: grid; place-items: center; width: 16px; height: 15px; border-right: 1px solid #aaa; border-bottom: 1px solid #aaa; }
.layouts button svg { width: 10px; height: 10px; }
.layouts .sheet { position: relative; z-index: 0; width: auto; padding: 2px 8px 0; border: 0; font: 11px/13px "Liberation Mono", monospace; }
.layouts .sheet::after { content: ""; position: absolute; z-index: -1; inset: 0 3px 0 0; border-right: 1px solid #000; border-bottom: 1px solid #888; transform: skewX(-35deg); }
.layouts .current { padding: 2px 9px 0; font-size: 12px; font-weight: bold; }
.layouts .current::before { content: ""; position: absolute; z-index: -1; inset: 0 9px 0 4px; border-left: 1px solid #000; border-bottom: 1px solid #000; background: #fff; transform: skewX(35deg); }
.layouts .current::after { left: 9px; border-bottom-color: #000; background: #fff; }

.callout { position: absolute; top: 0; left: 0; width: 736px; height: 608px; pointer-events: none; }
```
